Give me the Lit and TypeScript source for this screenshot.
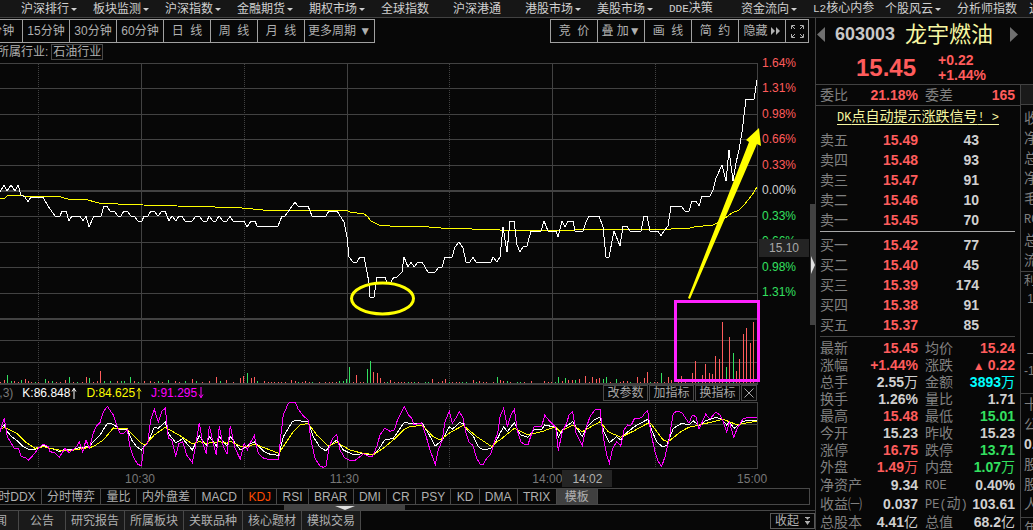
import { LitElement, html, css, svg, nothing } from "lit";
import { customElement } from "lit/decorators.js";

/* Splits ASCII runs out of mixed labels so they can use the half-width face. */
const mixed = (text: string) =>
  text.split(/([\x20-\x7e]+)/).map((part) => (/^[\x20-\x7e]+$/.test(part) ? html`<span class="latin">${part}</span>` : part));

/* Curve samples are kept in thirds of a pixel, in blocks with their own origin. */
const trace = (...blocks: [number, number, string][]) =>
  blocks
    .map(([ox, oy, raw]) =>
      raw
        .trim()
        .split(/\s+/)
        .map((pair) => {
          const [x, y] = pair.split(",").map(Number);
          return `${(ox + x / 3).toFixed(1)},${(oy + y / 3).toFixed(1)}`;
        })
        .join(" ")
    )
    .join(" ");

const PRICE = `0,192 4,185 7,191 11,185 15,191 18,185 21,195 25,197 28,202 31,197 43,197 48,206 55,216 60,216 62,211 66,211
69,221 72,216 80,216 83,221 86,216 89,227 94,216 101,216 104,206 107,206 110,211 114,211 118,216 121,216 124,211 127,211
131,216 134,216 138,221 142,221 144,216 148,216 151,211 154,211 158,216 162,211 165,211 169,221 172,216 176,221 179,216
182,216 185,221 192,221 196,216 199,216 203,221 207,221 209,216 213,221 216,221 219,216 223,221 227,221 230,216 233,221
244,221 247,227 251,221 255,221 257,226 278,226 282,216 285,216 295,202 298,206 308,206 312,216 326,216 329,211 337,211
344,222 347,237 349,257 353,262 357,262 360,257 364,257 367,272 369,283 370,297 374,297 377,277 385,277 387,283 391,282
394,277 397,277 402,272 404,257 408,267 411,262 414,267 418,262 422,262 428,272 435,272 439,267 442,267 445,257 452,257
455,247 459,242 463,248 466,262 470,262 473,257 476,262 491,262 493,257 497,262 500,257 503,227 507,252 510,221 514,221
517,245 520,252 523,247 527,246 531,231 541,231 544,221 548,231 556,231 558,237 562,221 565,227 568,221 573,221 575,231
583,231 586,222 589,216 599,216 603,227 606,257 609,257 614,231 620,246 623,226 627,226 630,231 641,231 644,216 647,216
650,231 658,231 661,236 664,231 668,226 671,206 681,206 685,211 689,211 692,201 696,201 699,206 702,196 710,196 713,190
716,178 722,165 726,181 729,150 733,181 736,163 739,150 742,132 746,99 754,99 757,80`;

const AVERAGE = `0,198 5,198 7,196 15,195 20,195 24,196 57,196 68,199 84,199 99,203 118,204 143,205 177,206 215,207 242,208
263,210 346,210 350,212 364,214 367,216 371,221 379,225 390,226 416,226 441,228 472,229 500,230 575,230 583,229 671,229
690,228 694,227 713,225 724,219 732,213 739,210 744,205 752,195 757,187`;

const J_LINE = trace(
  [0, 340, `0,275 13,235 22,290 43,325 55,325 64,350 75,352 85,361 100,345 115,325 130,312 145,320 150,335 165,338 178,352
195,325 208,338 220,328 230,320 238,305 248,335 258,300 268,325 280,280 288,260 300,248 310,215 322,199 340,225 352,262
360,280 370,282 382,270 390,320 400,350 413,373 424,377 432,320 443,310 452,240 463,208 475,245 486,213 496,205 505,295
515,300 527,347 537,310 548,305 560,345 577,368 587,315 598,248 608,310 619,342 628,258 640,310 649,345 658,258 670,320
681,342 691,258 705,325 721,357 733,310 742,330`],
  [250, 340, `0,310 13,287 25,340 40,354 55,358 86,358 92,290 100,225 115,190 127,186 136,187 145,208 160,228 175,240 183,300
195,355 210,378 220,382 228,378 238,320 248,295 260,283 270,330 285,355 300,361 315,361 330,350 341,341 355,348 368,348
380,320 390,285 404,265 420,274 433,270 443,238 463,199 475,225 485,235 492,255 515,248 527,285 540,330 556,373 565,330
577,300 585,245 598,213 607,250 620,230 628,216 638,230 648,280 658,308 668,315 680,355 690,372 700,373 710,355 722,343
735,300 743,280`],
  [500, 290, `0,380 11,355 22,410 33,375 43,358 52,420 62,455 75,464 84,464 95,430 103,409 125,409 134,376 150,395 167,412
175,482 187,425 200,400 207,375 218,365 228,430 247,466 258,415 270,380 285,360 300,358 310,440 320,495 328,520 338,475
350,455 362,468 372,420 383,405 392,408 403,387 425,383 435,368 443,362 453,430 465,485 475,515 485,529 495,500 507,450
520,370 530,364 545,367 555,382 567,400 577,375 588,380 597,418 617,373 630,387 647,367 660,375 670,395 680,427 688,395
701,442 712,415 728,388 742,382 772,382`]
);

const K_LINE = trace(
  [0, 340, `0,268 13,255 22,275 35,290 55,305 70,320 85,328 105,328 130,316 150,325 165,328 178,335 195,328 215,330 240,322
268,320 280,305 300,285 322,250 340,253 360,268 382,268 395,300 410,320 424,330 435,315 445,305 463,262 475,265 496,245
505,280 527,308 548,296 577,330 598,288 619,315 628,290 649,318 658,290 681,318 691,290 721,330 742,318`],
  [250, 340, `0,312 13,305 40,333 60,343 86,346 100,290 127,245 136,241 175,246 190,290 210,322 228,333 238,318 260,300
280,330 310,344 340,341 370,344 385,330 404,300 430,295 463,247 492,252 517,250 535,280 556,318 577,300 598,260 607,268
628,248 640,250 650,270 670,288 685,320 700,330 722,325 743,295`],
  [500, 290, `0,430 11,410 22,425 43,398 62,435 84,442 100,420 125,418 134,405 167,412 175,442 190,415 218,395 247,440
262,410 285,388 300,382 312,425 328,458 350,440 362,450 378,430 403,410 443,388 455,420 470,455 487,470 500,467 520,415
545,400 567,405 580,392 597,408 617,392 647,382 665,388 680,405 688,397 703,415 728,395 742,391 772,391`]
);

const D_LINE = trace(
  [0, 340, `0,268 13,262 50,280 75,305 105,325 130,320 180,331 215,331 280,320 310,300 340,264 382,267 424,310 435,315
463,285 496,262 545,290 577,312 598,305 620,310 660,305 681,310 691,303 721,318 742,318`],
  [250, 340, `0,318 13,312 86,340 130,275 150,255 175,250 200,285 235,318 260,307 300,330 330,338 370,344 400,325 430,300
463,268 480,260 517,256 550,290 570,300 600,278 640,256 680,290 725,320 743,303`],
  [500, 290, `0,450 43,415 84,435 125,425 167,410 180,425 218,405 247,425 300,395 325,425 362,442 403,422 443,400 453,402
490,450 505,455 545,423 567,412 597,405 670,388 710,404 772,393`]
);

/* Volume bars: x, height, g for a falling minute. */
const VOLUME = `0,1 4,3 7,8g 11,2g 14,2 18,1 21,3g 25,4 28,2 31,1 35,1g 38,1 45,4g 48,2 52,2g 56,1 60,1 65,3 69,6g 73,1 77,1g
82,1 86,6 89,5g 93,1 97,2 100,12 104,2g 110,2g 117,2 121,2g 124,2g 130,6g 134,2 138,1g 144,2 150,2 154,1 158,2g 162,1 168,3g
175,2 179,1 185,2g 192,4 196,2g 202,1 209,2 216,6 220,2g 226,3 233,1 240,5 243,7 247,10g 251,5 254,6 257,2g 264,2 268,1 271,1
274,1 278,1 281,1 285,1 291,3 295,2 298,1g 302,1 305,2 309,1 312,1g 319,1 325,1 329,1 332,1 336,1 339,2g 343,2g 346,4g
349,16g 353,1 356,8 360,1 363,1 367,14g 370,22g 373,11 377,10 380,5 384,1 387,1g 390,3 394,1 398,1 401,1 404,1 408,1g
411,1 414,1g 418,1 425,1g 428,1g 432,4 438,1 442,2 445,4 449,1g 452,1 456,1 459,1 462,1g 466,1g 473,3 476,1g 479,2 483,1
486,1 493,1 497,6g 500,3 503,2 507,2g 510,1 517,1g 520,1g 524,1 531,2 544,2 548,1 551,1 555,1g 558,6g 562,2 565,5g 568,3
572,3 575,3g 579,4 585,7 589,1 592,6 596,4 599,5 603,4g 606,6g 610,1 616,4g 620,1 623,2 627,2 630,1g 637,6 640,1 644,5
647,11 650,1g 654,1 657,1 661,10g 664,1 668,6 671,3 678,1 681,7 685,2 692,10 695,22 698,1g 702,8 705,19 709,10 712,9 715,27
719,24 722,61 726,16g 729,46 733,30g 736,12 739,24 743,49 746,55 750,40 753,61`
  .split(/\s+/)
  .map((item) => {
    const [x, h] = item.split(",");
    return { x: Number(x), h: parseInt(h, 10), down: h.endsWith("g") };
  });

const NAV: [string, boolean][] = [
  ["沪深排行", true], ["板块监测", true], ["沪深指数", true], ["金融期货", true], ["期权市场", true],
  ["全球指数", false], ["沪深港通", false], ["港股市场", true], ["美股市场", true], ["DDE决策", false],
  ["资金流向", true], ["L2核心内参", false], ["个股风云", true], ["分析师指数", false], ["近期", false],
];

const AXIS: [string, string][] = [
  ["1.64%", "up"], ["1.31%", "up"], ["0.98%", "up"], ["0.66%", "up"], ["0.33%", "up"],
  ["0.00%", "flat"], ["0.33%", "down"], ["0.66%", "down"], ["0.98%", "down"], ["1.31%", "down"],
];

const ASKS = [["卖五", "15.49", "43"], ["卖四", "15.48", "93"], ["卖三", "15.47", "91"], ["卖二", "15.46", "10"], ["卖一", "15.45", "70"]];
const BIDS = [["买一", "15.42", "77"], ["买二", "15.40", "45"], ["买三", "15.39", "174"], ["买四", "15.38", "91"], ["买五", "15.37", "85"]];

type Stat = [string, string, string];
const STATS: [Stat, Stat][] = [
  [["最新", "15.45", "up"], ["均价", "15.24", "up"]],
  [["涨幅", "+1.44%", "up"], ["涨跌", "▲0.22", "up"]],
  [["总手", "2.55万", "flat"], ["金额", "3893万", "cyan"]],
  [["换手", "1.26%", "flat"], ["量比", "1.71", "flat"]],
  [["最高", "15.48", "up"], ["最低", "15.01", "down"]],
  [["今开", "15.23", "flat"], ["昨收", "15.23", "flat"]],
  [["涨停", "16.75", "up"], ["跌停", "13.71", "down"]],
  [["外盘", "1.49万", "up"], ["内盘", "1.07万", "down"]],
  [["净资产", "9.34", "flat"], ["ROE", "0.40%", "flat"]],
  [["收益㈠", "0.037", "flat"], ["PE(动)", "103.61", "flat"]],
  [["总股本", "4.41亿", "flat"], ["总值", "68.2亿", "flat"]],
  [["流通股", "2.02亿", "flat"], ["流值", "31.2亿", "flat"]],
];

const INDICATORS = ["分时DDX", "分时博弈", "量比", "内外盘差", "MACD", "KDJ", "RSI", "BRAR", "DMI", "CR", "PSY", "KD", "DMA", "TRIX", "模板"];
const NEWS = ["新闻", "公告", "研究报告", "所属板块", "关联品种", "核心题材", "模拟交易"];

const value = (text: string) =>
  text.split(/([万亿▲])/).map((p) => (p === "▲" ? html`<span class="rise">▲</span>` : /[万亿]/.test(p) ? html`<span class="unit">${p}</span>` : p));

const base = css`
  * { box-sizing: border-box; }
  button {
    margin: 0; padding: 0; border: 0; background: none; color: inherit; font: inherit;
    white-space: pre; cursor: pointer;
  }
  a { color: inherit; text-decoration: none; }
  svg { display: block; }
  .up { color: #ff5c5c; }
  .down { color: #33e060; }
  .flat { color: #d0d0d0; }
  .cyan { color: #00ffff; }
`;

@customElement("stock-charts")
export class StockCharts extends LitElement {
  static styles = [base, css`
    :host { display: block; }
    .plots { display: flex; }
    .price { flex: 1; min-width: 0; height: 321px; overflow: visible; }
    .axis { position: relative; width: 57px; height: 321px; }
    .labels {
      display: flex; flex-direction: column; justify-content: space-between;
      height: 244px; margin-top: -7px; padding-left: 4px; line-height: 15px;
    }
    .cursor-price {
      position: absolute; left: 1px; top: 176px; width: 50px; height: 18px;
      background: #242424; color: #a8a8a8; text-align: center; line-height: 19px;
    }
    .legend { display: flex; align-items: center; height: 18px; margin-right: 58px; line-height: 20px; }
    .legend span { display: flex; align-items: center; gap: 1px; margin-right: 9px; }
    .legend .params { margin-left: -44px; color: #787878; }
    .k { color: #ffffff; }
    .d { color: #ffff00; }
    .j { color: #ff00ff; }
    .tools { display: flex; gap: 1px; margin-left: auto; color: #a8a8a8; }
    .tools button { width: 45px; height: 16px; border: 1px solid #484848; line-height: 15px; }
    .tools .close { display: grid; place-items: center; width: 16px; }
    .kdj { width: calc(100% - 57px); height: 67px; }
    .times {
      display: grid; grid-template-columns: 205fr 203fr 29fr 175fr 78fr;
      height: 19px; padding: 1px 0 0 125px; line-height: 18px; color: #787878;
    }
    .times .cursor-time { width: 50px; height: 17px; background: #242424; color: #b0b0b0; text-align: center; }
  `];

  private arrow(up: boolean) {
    return html`<svg width="6" height="12" viewBox="0 0 6 12" fill="none" stroke="currentColor">
      <path d=${up ? "M3 12V1M1 4.5 3 1.5 5 4.5" : "M3 0V11M1 7.5 3 10.5 5 7.5"} /></svg>`;
  }

  render() {
    return html`
      <div class="plots">
        <svg class="price" viewBox="0 63 758 321" preserveAspectRatio="none" fill="none" shape-rendering="crispEdges">
          <g stroke="#424242">
            ${[63, 88, 114, 139, 165, 216, 242, 267, 293, 340, 362].map((y) => svg`<path d=${`M0 ${y + 0.5}H758`} />`)}
            ${[141, 347, 552, 757].map((x) => svg`<path d=${`M${x + 0.5} 63V384`} />`)}
            ${[38, 244, 449, 655].map((x) => svg`<path d=${`M${x + 0.5} 64V384`} stroke-dasharray="1 1" />`)}
          </g>
          <path d="M0 191H758M0 319H758M0 384H758" stroke="#424242" stroke-width="2" />
          ${VOLUME.map((b) => svg`<rect x=${b.x} y=${383 - b.h} width="1" height=${b.h} fill=${b.down ? "#33e060" : "#ff5c5c"} />`)}
          <polyline points=${AVERAGE} stroke="#ffff00" />
          <polyline points=${PRICE} stroke="#ffffff" />
          <g shape-rendering="auto">
            <ellipse cx="382.5" cy="298.5" rx="31" ry="15.5" stroke="#ffff00" stroke-width="3" />
            <path d="M688 298 749 142 746 140 759 128 761 146 757 144 690 299Z" fill="#ffff00" />
            <rect x="675.5" y="301.5" width="83" height="79" stroke="#ff22ff" stroke-width="3" />
          </g>
        </svg>
        <div class="axis">
          <div class="labels">${AXIS.map(([t, c]) => html`<span class=${c}>${t}</span>`)}</div>
          <div class="cursor-price">15.10</div>
        </div>
      </div>
      <div class="legend">
        <span class="params">KDJ(9,3,3)</span>
        <span class="k">K:86.848${this.arrow(true)}</span>
        <span class="d">D:84.625${this.arrow(true)}</span>
        <span class="j">J:91.295${this.arrow(false)}</span>
        <div class="tools">
          <button>改参数</button><button>加指标</button><button>换指标</button>
          <button class="close" aria-label="关闭">
            <svg width="10" height="10" viewBox="0 0 10 10" stroke="#a8a8a8"><path d="M0.500 0.500 9.500 9.500M9.500 0.500 0.500 9.500" /></svg>
          </button>
        </div>
      </div>
      <svg class="kdj" viewBox="0 402 758 67" preserveAspectRatio="none" fill="none" shape-rendering="crispEdges">
        <g stroke="#424242">
          ${[402, 424, 446, 468].map((y) => svg`<path d=${`M0 ${y + 0.5}H758`} />`)}
          ${[141, 347, 552, 757].map((x) => svg`<path d=${`M${x + 0.5} 402V469`} />`)}
          ${[38, 244, 449, 655].map((x) => svg`<path d=${`M${x + 0.5} 404V468`} stroke-dasharray="1 1" />`)}
        </g>
        <polyline points=${K_LINE} stroke="#ffffff" />
        <polyline points=${D_LINE} stroke="#ffff00" />
        <polyline points=${J_LINE} stroke="#ff00ff" />
      </svg>
      <div class="times">
        <span>10:30</span><span>11:30</span><span>14:00</span><span class="cursor-time">14:02</span><span>15:00</span>
      </div>
    `;
  }
}

@customElement("quote-panel")
export class QuotePanel extends LitElement {
  static styles = [base, css`
    :host { display: flex; flex-direction: column; border-left: 1px solid #424242; font-size: 14px; color: #808080; overflow: hidden; }
    header { height: 67px; border-bottom: 1px solid #424242; flex: none; }
    .title { display: flex; align-items: center; height: 33px; padding: 0 15px 0 1px; }
    .title svg { width: 8px; height: 15px; fill: #707070; }
    .code { margin-left: 10px; font-size: 18px; font-weight: bold; color: #c8c8c8; }
    .name { margin: 0 auto 0 10px; font-size: 22px; line-height: 32px; color: #f6f6a0; white-space: nowrap; }
    .quote { display: flex; align-items: center; height: 33px; padding-left: 40px; font-weight: bold; }
    .last { font-size: 24px; line-height: 32px; }
    .delta { margin: 1px 0 0 22px; line-height: 15px; }
    .body { display: flex; flex: 1; min-height: 0; }
    .main { flex: 1; min-width: 0; }
    .latin { font-family: "Liberation Mono", monospace; font-size: 12px; }
    .ratio { display: grid; grid-template-columns: 98fr 90fr; column-gap: 7px; height: 21px; padding: 0 5px 0 4px; line-height: 20px; border-bottom: 1px solid #424242; }
    .ratio div { display: flex; justify-content: space-between; }
    .ratio b { line-height: 21px; }
    .signal { display: block; height: 24px; text-align: center; line-height: 20px; color: #f6f6a0; }
    .signal span { white-space: pre; }
    .signal a { text-decoration: underline; text-underline-offset: 3px; }
    table { width: calc(100% - 9px); margin: 0 5px 0 4px; border-collapse: collapse; table-layout: fixed; }
    th { padding: 0; text-align: left; font-weight: normal; white-space: nowrap; }
    td { padding: 0; text-align: right; font-weight: bold; white-space: nowrap; }
    .book { line-height: 20px; }
    .book .side { width: 40px; }
    .book .cost { width: 58px; }
    .book .pad { width: 36px; }
    .rule { height: 1px; margin: 1px 5px 3px 4px; background: #424242; }
    .rule.light { background: #a8a8a8; }
    .stats { line-height: 17px; }
    .stats .head { width: 44px; }
    .stats .left { width: 54px; }
    .stats .second { padding-left: 7px; width: 51px; }
    .unit { font-weight: normal; }
    .rise { margin-right: 3px; font-size: 12px; line-height: 12px; }
    .strip { width: 13px; flex: none; border-left: 1px solid #424242; overflow: hidden; line-height: 20px; white-space: nowrap; }
    .strip .cap { height: 20px; background: #1a1a1a; border-bottom: 1px solid #424242; }
    .strip .group { padding: 3px 0 1px 3px; border-bottom: 1px solid #424242; }
    .strip .profit { height: 122px; padding-top: 0; line-height: 18px; font-size: 12px; }
    .strip .profit div:nth-child(3) { margin-top: 36px; }
    .strip .shares { height: 124px; padding-top: 0; }
    .strip .last-group { padding: 0 0 0 3px; }
    .strip b { color: #d0d0d0; }
  `];

  private book(rows: string[][]) {
    return html`<table class="book">
      ${rows.map(([side, cost, volume]) => html`<tr>
        <th class="side" scope="row">${side}</th><td class="cost up">${cost}</td><td class="flat">${volume}</td><td class="pad"></td>
      </tr>`)}
    </table>`;
  }

  render() {
    return html`
      <header>
        <div class="title">
          <button aria-label="上一只"><svg viewBox="0 0 8 15"><path d="M8 0V15L0 7.500Z" /></svg></button>
          <span class="code">603003</span>
          <span class="name">龙宇燃油</span>
          <button aria-label="下一只"><svg viewBox="0 0 8 15"><path d="M0 0V15L8 7.500Z" /></svg></button>
        </div>
        <div class="quote up">
          <div class="last">15.45</div>
          <div class="delta"><div>+0.22</div><div>+1.44%</div></div>
        </div>
      </header>
      <div class="body">
        <div class="main">
          <div class="ratio">
            <div>委比<b class="up">21.18%</b></div>
            <div>委差<b class="up">165</b></div>
          </div>
          <div class="signal"><a href="#dk">${mixed("DK点自动提示涨跌信号! >")}</a></div>
          ${this.book(ASKS)}
          <div class="rule light"></div>
          ${this.book(BIDS)}
          <div class="rule"></div>
          <table class="stats">
            ${STATS.map(([a, b]) => html`<tr>
              <th class="head" scope="row">${mixed(a[0])}</th><td class="left ${a[2]}">${value(a[1])}</td>
              <th class="second" scope="row">${mixed(b[0])}</th><td class=${b[2]}>${value(b[1])}</td>
            </tr>`)}
          </table>
        </div>
        <div class="strip">
          <div class="cap"></div>
          <div class="group">${["收", "净", "总", "净", "毛", "RO", "总", "流"].map((t) => html`<div>${mixed(t)}</div>`)}</div>
          <div class="group profit"><div>利</div><div>&nbsp;1</div><div>&nbsp;–</div><div>-1</div></div>
          <div class="group shares"><div>十</div><div>公</div><div><b>0.</b></div><div>股</div><div>股</div><div>人</div></div>
          <div class="last-group">年</div>
        </div>
      </div>
    `;
  }
}

@customElement("app-root")
export class AppRoot extends LitElement {
  static styles = [base, css`
    :host {
      display: flex; flex-direction: column; height: 100vh; overflow: hidden; background: #070707; color: #b0b0b0;
      font: 12px "Liberation Sans", "Noto Sans CJK SC", sans-serif;
    }
    nav {
      display: flex; flex: none; height: 18px; padding: 1px 0 0 21px; overflow: hidden;
      background: #161616; border-bottom: 1px solid #424242; line-height: 17px; color: #d0d0d0;
    }
    nav a { display: flex; align-items: center; gap: 2px; flex: 0 0 72px; white-space: nowrap; }
    nav .latin { font-family: "Liberation Mono", monospace; font-size: 11px; }
    .caret { border: 3px solid transparent; border-top-color: #d0d0d0; border-bottom: 0; }
    .page { display: flex; flex: 1; min-height: 0; }
    .left { position: relative; flex: 1; min-width: 0; display: flex; flex-direction: column; overflow: hidden; }
    quote-panel { flex: 0 0 218px; }
    .toolbar { display: flex; justify-content: space-between; flex: none; margin: 1px 6px 0 -25px; }
    .group { display: flex; border: 1px solid #a0a0a0; }
    .group button { display: flex; align-items: center; justify-content: center; width: 47px; height: 22px; line-height: 22px; border-right: 1px solid #a0a0a0; }
    .group button:last-child { border-right: 0; width: 22px; }
    .group .more, .group .more:last-child { width: 69px; }
    .industry { display: flex; flex: none; height: 20px; padding-top: 1px; margin-left: -3px; gap: 3px; line-height: 17px; }
    .industry a { height: 16px; padding: 0 1px; border: 1px solid #484848; line-height: 15px; }
    .indicators { display: flex; flex: none; height: 17px; margin: 0 5px 0 -20px; border: 1px solid #484848; }
    .tabs { display: flex; flex: none; width: 617px; }
    .tabs button { flex: 1 0 auto; padding: 0 5px; border-right: 1px solid #484848; line-height: 17px; height: 15px; }
    .tabs button.current { color: #ff4a00; }
    .tabs button.template { padding: 0 8px; background: #404040; }
    .news { display: flex; flex: none; align-items: center; height: 20px; margin: 5px 0 0 -28px; border-top: 1px solid #484848; }
    .news .tab { min-width: 47px; height: 19px; padding: 0 5px; background: #1a1a1a; border-right: 1px solid #484848; line-height: 21px; }
    .news .fold { display: flex; align-items: center; justify-content: center; gap: 6px; width: 45px; height: 16px; margin-left: auto; border: 1px solid #585858; line-height: 14px; }
    .side-handle, .bottom-handle { position: absolute; display: grid; place-items: center; background: #424242; }
    .side-handle { right: 0; top: 186px; width: 5px; height: 121px; }
    .bottom-handle { left: 284px; bottom: 20px; width: 121px; height: 5px; }
  `];

  render() {
    return html`
      <nav>
        ${NAV.map(([t, menu]) => html`<a href="#menu"><span>${mixed(t)}</span>${menu ? html`<span class="caret"></span>` : nothing}</a>`)}
      </nav>
      <div class="page">
        <div class="left">
          <div class="toolbar">
            <div class="group">
              ${["5分钟", "15分钟", "30分钟", "60分钟", "日\u00a0\u00a0线", "周\u00a0\u00a0线", "月\u00a0\u00a0线"].map((t) => html`<button>${t}</button>`)}
              <button class="more">更多周期 ▼</button>
            </div>
            <div class="group">
              ${["竞\u00a0\u00a0价", "叠 加▼", "画\u00a0\u00a0线", "简\u00a0\u00a0约"].map((t) => html`<button>${t}</button>`)}
              <button>隐藏<svg width="13" height="8" viewBox="0 0 13 8" fill="currentColor"><path d="M3 0 7 4 3 8ZM8 0 12 4 8 8Z" /></svg></button>
              <button aria-label="全屏">
                <svg width="13" height="13" viewBox="0 0 13 13" fill="none" stroke="currentColor">
                  <path d="M0.500 4V0.500H4M9 0.500H12.500V4M12.500 9V12.500H9M4 12.500H0.500V9M1 1 4 4M12 1 9 4M12 12 9 9M1 12 4 9" />
                </svg>
              </button>
            </div>
          </div>
          <div class="industry"><span>所属行业:</span><a href="#industry">石油行业</a></div>
          <stock-charts></stock-charts>
          <div class="indicators">
            <div class="tabs">
              ${INDICATORS.map((t) => html`<button class=${t === "KDJ" ? "current" : t === "模板" ? "template" : ""}>${t}</button>`)}
            </div>
          </div>
          <div class="news">
            ${NEWS.map((t) => html`<button class="tab">${t}</button>`)}
            <button class="fold">收起<svg width="5" height="8" viewBox="0 0 5 8" fill="currentColor"><path d="M0 0H5V1H0ZM1 1H4L2.500 3ZM0 4H5V5H0ZM0.500 5H4.500L2.500 8Z" /></svg></button>
          </div>
          <button class="side-handle" aria-label="展开侧栏"><svg width="4" height="18" viewBox="0 0 4 18" fill="#e0e0e0"><path d="M0 0 4 9 0 18Z" /></svg></button>
          <button class="bottom-handle" aria-label="展开底栏"><svg width="20" height="4" viewBox="0 0 20 4" fill="#e0e0e0"><path d="M0 0H20L10 4Z" /></svg></button>
        </div>
        <quote-panel></quote-panel>
      </div>
    `;
  }
}
